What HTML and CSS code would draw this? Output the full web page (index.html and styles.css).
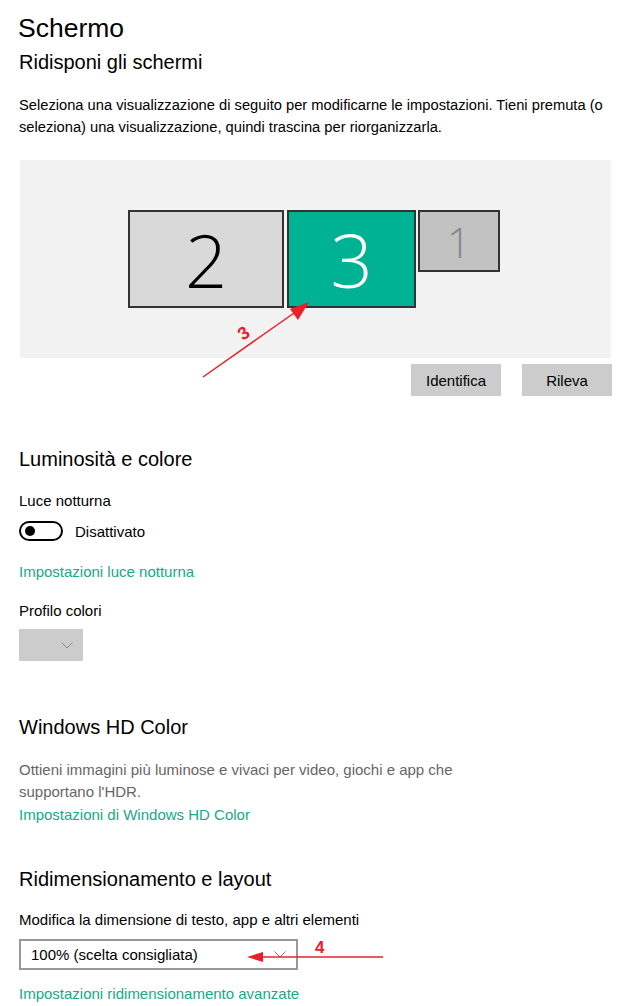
FILE: index.html
```html
<!DOCTYPE html>
<html lang="it">
<head>
    <meta charset="UTF-8">
    <meta name="viewport" content="width=device-width, initial-scale=1.0">
    <title>Schermo</title>
    <link rel="stylesheet" href="styles.css">
</head>
<body>
    <div class="pagina">
        <h1 class="titolo">Schermo</h1>
        <h2 class="sottotitolo">Ridisponi gli schermi</h2>
        <p class="intro">Seleziona una visualizzazione di seguito per modificarne le impostazioni. Tieni premuta (o seleziona) una visualizzazione, quindi trascina per riorganizzarla.</p>

        <div class="disposizione">
            <div class="schermi">
                <div class="schermo schermo-2">2</div>
                <div class="schermo schermo-3">3</div>
                <div class="schermo schermo-1">1</div>
            </div>
            <svg class="freccia freccia-3" width="140" height="100" viewBox="0 0 140 100">
                <line x1="6" y1="94" x2="100" y2="28" stroke="#e8202a" stroke-width="1.5"/>
                <polygon points="112,19 93,26 101,37" fill="#e8202a"/>
            </svg>
            <span class="etichetta etichetta-3">3</span>
        </div>

        <div class="pulsanti">
            <button type="button">Identifica</button>
            <button type="button">Rileva</button>
        </div>

        <h3 class="sezione sezione-luce">Luminosità e colore</h3>
        <div class="etichetta-campo">Luce notturna</div>
        <div class="interruttore-riga">
            <span class="interruttore"><span class="pomello"></span></span>
            <span>Disattivato</span>
        </div>
        <a class="collegamento link-luce" href="#">Impostazioni luce notturna</a>
        <div class="etichetta-campo profilo">Profilo colori</div>
        <div class="tendina-vuota">
            <svg width="12" height="7" viewBox="0 0 12 7"><polyline points="0.5,0.5 6,6 11.5,0.5" fill="none" stroke="#888" stroke-width="1"/></svg>
        </div>

        <h3 class="sezione sezione-hd">Windows HD Color</h3>
        <p class="descrizione">Ottieni immagini più luminose e vivaci per video, giochi e app che supportano l'HDR.</p>
        <a class="collegamento link-hd" href="#">Impostazioni di Windows HD Color</a>

        <h3 class="sezione sezione-layout">Ridimensionamento e layout</h3>
        <div class="etichetta-campo modifica">Modifica la dimensione di testo, app e altri elementi</div>
        <div class="selezione-riga">
            <div class="selezione">
                <span>100% (scelta consigliata)</span>
                <svg width="12" height="7" viewBox="0 0 12 7"><polyline points="0.5,0.5 6,6 11.5,0.5" fill="none" stroke="#777" stroke-width="1"/></svg>
            </div>
            <svg class="freccia freccia-4" width="140" height="16" viewBox="0 0 140 16">
                <line x1="10" y1="8" x2="136" y2="8" stroke="#e8202a" stroke-width="1.5"/>
                <polygon points="0,8 16,3 16,13" fill="#e8202a"/>
            </svg>
            <span class="etichetta etichetta-4">4</span>
        </div>
        <a class="collegamento link-layout" href="#">Impostazioni ridimensionamento avanzate</a>
    </div>
</body>
</html>
```

FILE: styles.css
```css
* {
    margin: 0;
    padding: 0;
    box-sizing: border-box;
}

body {
    background-color: #fff;
    color: #000;
    font-family: 'Liberation Sans', Arial, sans-serif;
    font-size: 15px;
}

.pagina {
    padding: 8px 13px 0 19px;
}

.titolo {
    font-size: 26.5px;
    font-weight: normal;
    line-height: 40px;
    margin-left: -1px;
}

.sottotitolo {
    font-size: 20px;
    font-weight: normal;
    line-height: 28px;
}

.intro {
    margin-top: 18px;
    font-size: 14.7px;
    line-height: 22px;
}

.disposizione {
    position: relative;
    margin-top: 22px;
    margin-left: 1px;
    height: 198px;
    background-color: #f2f2f2;
    display: flex;
    align-items: center;
    justify-content: center;
    padding-right: 3px;
}

.schermi {
    display: flex;
    align-items: flex-start;
    gap: 3px;
}

.schermo {
    display: flex;
    align-items: center;
    justify-content: center;
    border: 2px solid #333;
    font-family: 'Open Sans', 'Noto Sans', sans-serif;
    font-weight: 300;
}

.schermo-2 {
    width: 156px;
    height: 98px;
    background-color: #d9d9d9;
    font-size: 74px;
}

.schermo-3 {
    width: 129px;
    height: 98px;
    background-color: #00b294;
    color: #fff;
    font-size: 74px;
}

.schermo-1 {
    width: 82px;
    height: 62px;
    margin-left: -1px;
    background-color: #c2c2c2;
    color: #888;
    font-size: 42px;
}

.freccia {
    position: absolute;
}

.freccia-3 {
    left: 177px;
    top: 123px;
}

.etichetta {
    position: absolute;
    color: #e8202a;
    font-weight: bold;
    font-family: 'Liberation Sans', Arial, sans-serif;
}

.etichetta-3 {
    left: 219px;
    top: 163px;
    font-size: 18px;
    transform: rotate(-35deg);
}

.pulsanti {
    display: flex;
    justify-content: flex-end;
    gap: 21px;
    margin-top: 6px;
    margin-right: -1px;
}

.pulsanti button {
    width: 90px;
    height: 32px;
    border: none;
    background-color: #ccc;
    font-family: inherit;
    font-size: 15px;
    color: #000;
}

.sezione {
    font-size: 20px;
    font-weight: normal;
    line-height: 28px;
}

.sezione-luce {
    margin-top: 49px;
}

.etichetta-campo {
    line-height: 20px;
    margin-top: 18px;
}

.interruttore-riga {
    display: flex;
    align-items: center;
    gap: 12px;
    margin-top: 10px;
    height: 20px;
}

.interruttore {
    display: flex;
    align-items: center;
    width: 44px;
    height: 20px;
    border: 2px solid #000;
    border-radius: 10px;
    padding-left: 4px;
}

.pomello {
    width: 10px;
    height: 10px;
    border-radius: 50%;
    background-color: #000;
}

.collegamento {
    display: block;
    line-height: 20px;
    color: #17a88a;
    text-decoration: none;
}

.link-luce {
    margin-top: 21px;
}

.profilo {
    margin-top: 19px;
}

.tendina-vuota {
    display: flex;
    align-items: center;
    justify-content: flex-end;
    width: 64px;
    height: 32px;
    margin-top: 8px;
    padding-right: 10px;
    background-color: #ccc;
}

.sezione-hd {
    margin-top: 52px;
}

.descrizione {
    max-width: 480px;
    margin-top: 18px;
    line-height: 22px;
    color: #666;
}

.link-hd {
    margin-top: 2px;
}

.sezione-layout {
    margin-top: 40px;
}

.modifica {
    margin-top: 17px;
}

.selezione-riga {
    position: relative;
    margin-top: 9px;
}

.selezione {
    display: flex;
    align-items: center;
    justify-content: space-between;
    width: 279px;
    height: 31px;
    padding: 0 10px 0 10px;
    border: 2px solid #999;
}

.freccia-4 {
    left: 228px;
    top: 10px;
}

.etichetta-4 {
    left: 296px;
    top: -1px;
    font-size: 17px;
}

.link-layout {
    margin-top: 14px;
}
```
